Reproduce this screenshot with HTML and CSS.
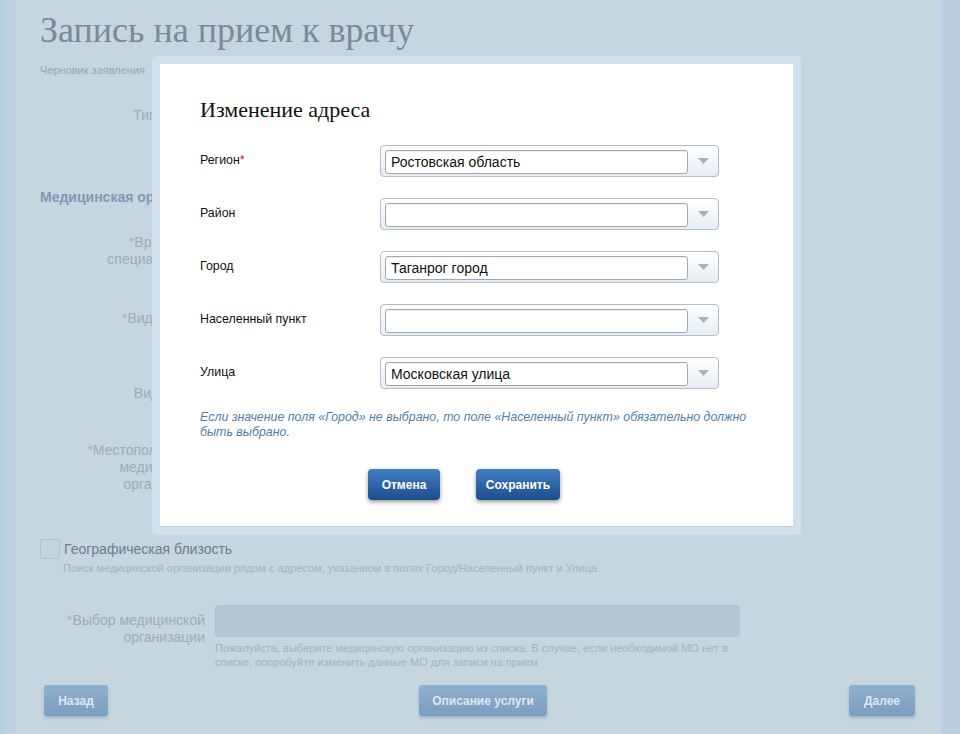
FILE: index.html
```html
<!DOCTYPE html>
<html lang="ru">
<head>
<meta charset="utf-8">
<title>Запись на прием к врачу</title>
<link rel="stylesheet" href="styles.css">
</head>
<body>
<div class="page">
  <div class="strip-left"></div>
  <main class="main">
    <h1 class="title">Запись на прием к врачу</h1>
    <div class="draft">Черновик заявления</div>

    <div class="row row-type">
      <div class="lbl">Тип записи</div>
      <div class="fld"></div>
    </div>

    <h2 class="section">Медицинская организация</h2>

    <div class="row row-doc">
      <div class="lbl"><span class="ast">*</span>Врачебная<br>специальность</div>
      <div class="fld"></div>
    </div>
    <div class="row row-kind">
      <div class="lbl"><span class="ast">*</span>Вид приема</div>
      <div class="fld"></div>
    </div>
    <div class="row row-serv">
      <div class="lbl">Вид услуги</div>
      <div class="fld"></div>
    </div>
    <div class="row row-loc">
      <div class="lbl"><span class="ast">*</span>Местоположение<br>медицинской<br>организации</div>
      <div class="fld"></div>
    </div>

    <div class="geo">
      <span class="checkbox"></span>
      <span class="geo-text">Географическая близость</span>
    </div>
    <div class="geo-hint">Поиск медицинской организации рядом с адресом, указанном в полях Город/Населенный пункт и Улица</div>

    <div class="row row-mo">
      <div class="lbl"><span class="ast">*</span>Выбор медицинской<br>организации</div>
      <div class="mo-col">
        <div class="mo-input"></div>
        <div class="mo-hint">Пожалуйста, выберите медицинскую организацию из списка. В случае, если необходимой МО нет в списке, попробуйте изменить данные МО для записи на прием</div>
      </div>
    </div>

    <div class="nav">
      <button class="nav-btn nav-back">Назад</button>
      <button class="nav-btn nav-desc">Описание услуги</button>
      <button class="nav-btn nav-next">Далее</button>
    </div>
  </main>
  <div class="strip-right"></div>
</div>

<div class="modal">
  <div class="modal-body">
    <h3 class="modal-title">Изменение адреса</h3>
    <div class="form">
      <div class="f-label">Регион<span class="req">*</span></div>
      <div class="select"><div class="select-input">Ростовская область</div><span class="arrow"><svg width="11" height="6" viewBox="0 0 11 6"><path d="M0 0H11L5.5 6Z" fill="#a7b2bb"/></svg></span></div>

      <div class="f-label">Район</div>
      <div class="select"><div class="select-input"></div><span class="arrow"><svg width="11" height="6" viewBox="0 0 11 6"><path d="M0 0H11L5.5 6Z" fill="#a7b2bb"/></svg></span></div>

      <div class="f-label">Город</div>
      <div class="select"><div class="select-input">Таганрог город</div><span class="arrow"><svg width="11" height="6" viewBox="0 0 11 6"><path d="M0 0H11L5.5 6Z" fill="#a7b2bb"/></svg></span></div>

      <div class="f-label">Населенный пункт</div>
      <div class="select"><div class="select-input"></div><span class="arrow"><svg width="11" height="6" viewBox="0 0 11 6"><path d="M0 0H11L5.5 6Z" fill="#a7b2bb"/></svg></span></div>

      <div class="f-label">Улица</div>
      <div class="select"><div class="select-input">Московская улица</div><span class="arrow"><svg width="11" height="6" viewBox="0 0 11 6"><path d="M0 0H11L5.5 6Z" fill="#a7b2bb"/></svg></span></div>
    </div>
    <p class="hint">Если значение поля «Город» не выбрано, то поле «Населенный пункт» обязательно должно быть выбрано.</p>
    <div class="actions">
      <button class="btn btn-cancel">Отмена</button>
      <button class="btn btn-save">Сохранить</button>
    </div>
  </div>
</div>
</body>
</html>
```

FILE: styles.css
```css
* { box-sizing: border-box; }
html, body { margin: 0; padding: 0; }
body {
  width: 960px;
  height: 734px;
  overflow: hidden;
  background: #c7d5df;
  font-family: "Liberation Sans", Arial, sans-serif;
  position: relative;
}
.page {
  display: flex;
  height: 734px;
}
.strip-left {
  width: 15px;
  background: linear-gradient(to right, #b7cddc, #bfd2df);
  border-right: 1px solid #b5cad9;
}
.strip-right {
  width: 19px;
  background: #bacfdd;
  border-left: 1px solid #bdd0dd;
}
.main {
  flex: 1;
  padding: 0 26px 0 25px;
  display: flex;
  flex-direction: column;
  background: #c7d5df;
}
.title {
  margin: 0;
  padding-top: 10px;
  font-family: "Liberation Serif", Georgia, serif;
  font-weight: normal;
  font-size: 36px;
  line-height: 40px;
  color: #7a8a96;
}
.draft {
  margin-top: 13px;
  font-size: 11px;
  line-height: 14px;
  color: #99a6b0;
}
.row {
  display: flex;
  align-items: flex-start;
  gap: 10px;
}
.lbl {
  width: 165px;
  flex: none;
  text-align: right;
  font-size: 14px;
  line-height: 17px;
  color: #a0acb5;
}
.ast { color: #c6a3ab; }
.fld {
  width: 525px;
  height: 17px;
}
.row-type { margin-top: 30px; }
.section {
  margin: 65px 0 0;
  font-size: 14px;
  line-height: 17px;
  font-weight: bold;
  color: #7f9ab3;
}
.row-doc { margin-top: 28px; }
.row-kind { margin-top: 42px; }
.row-serv { margin-top: 58px; }
.row-loc { margin-top: 40px; }
.geo {
  margin-top: 46px;
  display: flex;
  align-items: center;
  gap: 4px;
  height: 20px;
}
.checkbox {
  width: 20px;
  height: 20px;
  border: 1px solid #b3c2cd;
  border-radius: 2px;
  background: #c5d3dd;
}
.geo-text {
  font-size: 14px;
  color: #6f7e89;
}
.geo-hint {
  margin: 2px 0 0 23px;
  font-size: 11px;
  line-height: 14px;
  color: #a6b3bc;
}
.row-mo {
  margin-top: 30px;
}
.row-mo .lbl { padding-top: 7px; }
.mo-col { width: 525px; }
.mo-input {
  height: 32px;
  border-radius: 4px;
  background: #b5c6d3;
  border: 1px solid #b0c2cf;
}
.mo-hint {
  margin-top: 4px;
  font-size: 11px;
  line-height: 14px;
  color: #a6b3bc;
}
.nav {
  margin-top: 16px;
  padding-left: 4px;
  display: flex;
  justify-content: space-between;
}
.nav-btn {
  height: 31px;
  padding: 0;
  border: none;
  border-radius: 3px;
  background: linear-gradient(#90b0cf, #7b9dbf);
  box-shadow: 0 2px 3px rgba(90, 120, 150, 0.35);
  color: #dde7f0;
  font-family: "Liberation Sans", Arial, sans-serif;
  font-size: 12px;
  font-weight: bold;
}
.nav-back { width: 64px; }
.nav-desc { width: 128px; margin-left: 9px; }
.nav-next { width: 66px; }

/* modal */
.modal {
  position: absolute;
  left: 152px;
  top: 56px;
  width: 649px;
  height: 479px;
  padding: 8px;
  border-radius: 5px;
  background: #d1e1eb;
}
.modal-body {
  background: #fff;
  height: 100%;
  padding: 34px 40px 27px;
  border-bottom: 1px solid #b9d0dd;
}
.modal-title {
  margin: 0;
  font-family: "Liberation Serif", Georgia, serif;
  font-weight: normal;
  font-size: 22px;
  line-height: 24px;
  color: #111;
}
.form {
  margin-top: 23px;
  display: grid;
  grid-template-columns: 180px 339px;
  row-gap: 21px;
  align-items: center;
}
.f-label {
  font-size: 12.4px;
  line-height: 15px;
  color: #111;
  margin-top: -2px;
}
.req { color: #b3232f; }
.select {
  height: 32px;
  border: 1px solid #b4bec6;
  border-radius: 4px;
  background: linear-gradient(#ffffff, #e6edf3);
  padding: 4px 0 0 4px;
  display: flex;
  align-items: flex-start;
}
.select-input {
  width: 303px;
  height: 24px;
  border: 1px solid #9ea9b2;
  border-radius: 3px;
  background: #fff;
  box-shadow: inset 0 1px 1px rgba(0,0,0,0.06);
  font-size: 14px;
  line-height: 22px;
  padding-left: 5px;
  color: #111;
}
.arrow {
  width: 30px;
  height: 22px;
  display: flex;
  align-items: center;
  justify-content: center;
}
.arrow svg { display: block; }
.hint {
  margin: 21px 0 0;
  font-size: 12.4px;
  line-height: 15px;
  font-style: italic;
  color: #4f7fa7;
}
.actions {
  margin-top: 29px;
  padding-left: 168px;
  display: flex;
  gap: 36px;
}
.btn {
  height: 31px;
  padding: 0;
  border: none;
  border-radius: 4px;
  background: linear-gradient(#407fc2, #1d4d8c);
  box-shadow: 0 2px 4px rgba(0, 0, 0, 0.4);
  color: #fff;
  font-family: "Liberation Sans", Arial, sans-serif;
  font-size: 12px;
  font-weight: bold;
}
.btn-cancel { width: 72px; }
.btn-save { width: 84px; }
```
